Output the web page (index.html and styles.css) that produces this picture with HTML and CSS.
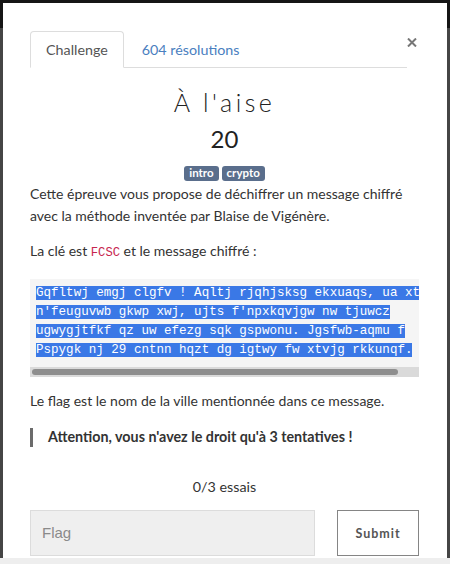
FILE: index.html
```html
<!DOCTYPE html>
<html lang="fr">
<head>
<meta charset="utf-8">
<title>À l'aise</title>
<link rel="stylesheet" href="styles.css">
</head>
<body>
<div class="backdrop">
  <div class="modal">
    <div class="modal-head">
      <ul class="tabs">
        <li class="tab active">Challenge</li>
        <li class="tab"><a class="tab-link">604 résolutions</a></li>
      </ul>
      <span class="close" aria-label="Fermer"><svg width="10" height="9" viewBox="0 0 10 9"><path d="M1 0.5 L9 8.5 M9 0.5 L1 8.5" stroke="#777" stroke-width="2" fill="none"/></svg></span>
    </div>
    <h1 class="title">À l'aise</h1>
    <div class="points">20</div>
    <div class="tags"><span class="tag">intro</span><span class="tag">crypto</span></div>
    <p class="text first">Cette épreuve vous propose de déchiffrer un message chiffré avec la méthode inventée par Blaise de Vigénère.</p>
    <p class="text gap">La clé est <code class="code">FCSC</code> et le message chiffré :</p>
    <div class="pre-box">
      <pre class="pre"><span class="sel">Gqfltwj emgj clgfv ! Aqltj rjqhjsksg ekxuaqs, ua xtwk</span>
<span class="sel">n'feuguvwb gkwp xwj, ujts f'npxkqvjgw nw tjuwcz</span>
<span class="sel">ugwygjtfkf qz uw efezg sqk gspwonu. Jgsfwb-aqmu f</span>
<span class="sel">Pspygk nj 29 cntnn hqzt dg igtwy fw xtvjg rkkunqf.</span></pre>
      <div class="scrollbar"><div class="thumb"></div></div>
    </div>
    <p class="text after-pre">Le flag est le nom de la ville mentionnée dans ce message.</p>
    <blockquote class="quote">Attention, vous n'avez le droit qu'à 3 tentatives !</blockquote>
    <div class="tries">0/3 essais</div>
    <form class="flag-form">
      <input class="flag-input" type="text" placeholder="Flag">
      <button class="submit" type="button">Submit</button>
    </form>
  </div>
</div>
<div class="bottombar"></div>
</body>
</html>
```
FILE: styles.css
```css
html, body {
  margin: 0;
  padding: 0;
}
body {
  width: 450px;
  height: 564px;
  overflow: hidden;
  background: #3d3d3d;
  font-family: "Lato", "Open Sans", sans-serif;
  color: #333;
}
.backdrop {
  height: 558px;
  padding: 3px 3px 0 3px;
  box-sizing: border-box;
  background: linear-gradient(#151515 0, #151515 28px, #454545 28px);
}
.modal {
  height: 555px;
  background: #fff;
  padding: 28px 28px 0 27px;
  box-sizing: border-box;
  overflow: hidden;
}
.modal-head {
  display: flex;
  align-items: flex-start;
}
.tabs {
  flex: 1;
  display: flex;
  list-style: none;
  margin: 0;
  padding: 0;
  border-bottom: 1px solid #ddd;
}
.tab {
  font-size: 14.3px;
  line-height: 19px;
  padding: 8px 15px;
  border: 1px solid transparent;
  border-radius: 4px 4px 0 0;
  margin-right: 2px;
  margin-bottom: -1px;
}
.tab.active {
  border-color: #ddd #ddd transparent;
  background: #fff;
  color: #555;
}
.tab-link {
  color: #4a80c0;
  text-decoration: none;
}
.close {
  width: 12px;
  padding-top: 7px;
  display: flex;
}
.title {
  margin: 19px 0 0;
  text-align: center;
  font-weight: 300;
  font-size: 25px;
  line-height: 30px;
  letter-spacing: 3.5px;
  color: #222;
}
.points {
  margin-top: 7px;
  text-align: center;
  font-size: 24px;
  line-height: 29px;
  color: #222;
}
.tags {
  margin-top: 13px;
  display: flex;
  justify-content: center;
  gap: 3px;
}
.tag {
  background: #5a6e8c;
  color: #fff;
  font-weight: 700;
  font-size: 11.5px;
  line-height: 12px;
  padding: 1px 5px 2px;
  border-radius: 3px;
}
.text {
  margin: 0;
  font-size: 14px;
  line-height: 22px;
}
.first {
  margin-top: 2px;
}
.gap {
  margin-top: 13px;
}
.code {
  font-family: "Liberation Mono", monospace;
  font-size: 12.2px;
  color: #c7254e;
}
.pre-box {
  margin-top: 15px;
  background: #f5f5f5;
}
.pre {
  margin: 0;
  padding: 5px 0 7px 6px;
  overflow: hidden;
  font-family: "Liberation Mono", monospace;
  font-size: 12.55px;
  line-height: 19px;
  color: #fff;
  white-space: pre;
}
.sel {
  background: #3a78e6;
}
.scrollbar {
  height: 10px;
  background: #dadada;
  padding: 2px 21px 0 2px;
  box-sizing: border-box;
}
.thumb {
  height: 6px;
  border-radius: 3px;
  background: #8e8e8e;
}
.after-pre {
  margin-top: 13px;
}
.quote {
  margin: 16px 0 0;
  padding: 0 0 0 15px;
  border-left: 3px solid #6b6b6b;
  font-weight: 700;
  font-size: 14.3px;
  line-height: 18.5px;
}
.tries {
  margin-top: 29px;
  text-align: center;
  font-size: 14.3px;
  line-height: 22px;
}
.flag-form {
  margin-top: 12px;
  display: flex;
  gap: 22px;
}
.flag-input {
  width: 285px;
  height: 46px;
  box-sizing: border-box;
  margin: 0;
  padding: 0 11px;
  background: #efefef;
  border: 1px solid #dcdcdc;
  font-family: "Liberation Sans", Arial, sans-serif;
  font-size: 15px;
  color: #333;
  outline: none;
}
.flag-input::placeholder {
  color: #8a8a8a;
}
.submit {
  width: 82px;
  height: 46px;
  box-sizing: border-box;
  margin: 0;
  background: #fff;
  border: 1px solid #858585;
  font-family: "Lato", sans-serif;
  font-weight: 700;
  font-size: 12.5px;
  letter-spacing: 1px;
  color: #555;
  padding: 2px 0 0;
}
.bottombar {
  height: 6px;
  background: #eeeeee;
}
```
